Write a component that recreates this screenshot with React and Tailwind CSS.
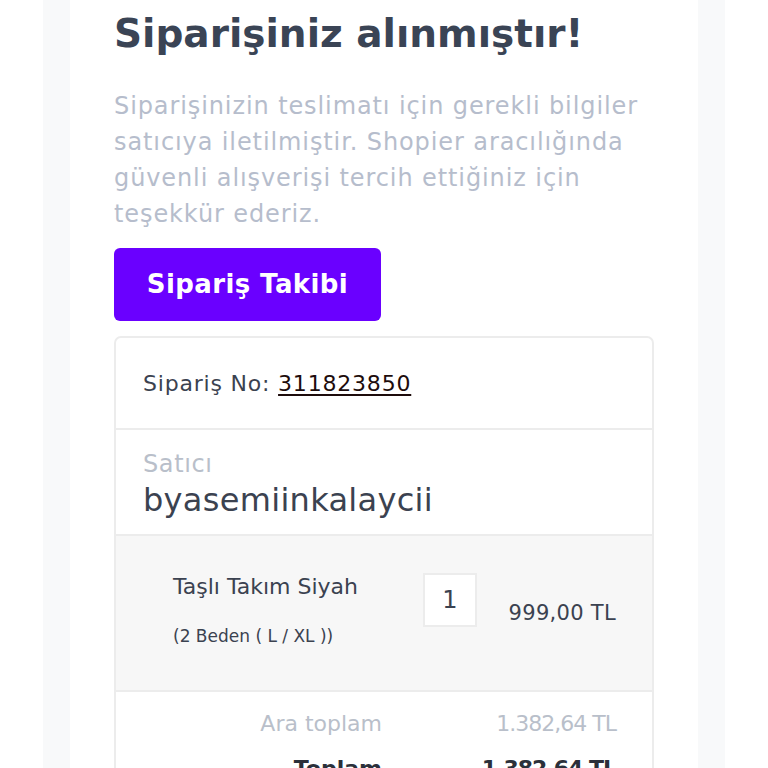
export default function App() {
    const font = { fontFamily: '"DejaVu Sans", "Noto Sans", sans-serif' };

    return (
        <div className="w-full h-[768px] overflow-hidden bg-white px-[43px]" style={font}>
            <div className="bg-[#f8f9fa] px-[27px] h-full">
                <div className="bg-white h-full px-[44px] pt-[10px]">
                    <h1 className="text-[39px] leading-[48px] font-bold text-[#3a4455]">
                        Siparişiniz alınmıştır!
                    </h1>
                    <p className="mt-[30px] text-[24px] leading-[36px] tracking-[0.9px] text-[#b6bdcc]">
                        Siparişinizin teslimatı için gerekli bilgiler satıcıya iletilmiştir. Shopier aracılığında güvenli alışverişi tercih ettiğiniz için teşekkür ederiz.
                    </p>

                    <button className="mt-4 w-[267px] h-[73px] rounded-[6px] bg-[#6a00ff] text-white text-[26px] font-bold tracking-[0.4px]">
                        Sipariş Takibi
                    </button>

                    {/* siparis karti */}
                    <div className="mt-[15px] border-2 border-[#ececec] rounded-[7px] overflow-hidden">
                        <div className="h-[90px] px-[27px] flex items-center text-[22px] tracking-[0.8px] text-[#3b4250]">
                            <span>Sipariş No:&nbsp;</span>
                            <a href="#" className="text-[#1d0c0c] underline underline-offset-[3px] decoration-2">311823850</a>
                        </div>
                        <div className="border-t-2 border-[#ececec] h-[106px] px-[27px] pt-[18px]">
                            <div className="text-[24px] leading-[32px] tracking-[0.6px] text-[#b9bfca]">Satıcı</div>
                            <div className="text-[32px] leading-[40px] tracking-[0.3px] text-[#3b4250]">byasemiinkalaycii</div>
                        </div>
                        <div className="border-t-2 border-[#ececec] bg-[#f7f7f7] h-[156px] flex pl-[57px] pr-[36px] pt-[36px]">
                            <div className="w-[250px]">
                                <div className="text-[22px] leading-[30px] text-[#3b4250]">Taşlı Takım Siyah</div>
                                <div className="mt-[22px] text-[17px] leading-[24px] text-[#3b4250]">(2 Beden ( L / XL ))</div>
                            </div>
                            <div className="w-[54px] h-[54px] bg-white border-2 border-[#ececec] flex items-center justify-center text-[24px] text-[#3b4250] mt-[1px]">
                                1
                            </div>
                            <div className="flex-1 text-right text-[21px] tracking-[0.3px] text-[#3b4250] pt-[26px]">
                                999,00 TL
                            </div>
                        </div>
                        <div className="border-t-2 border-[#ececec] px-[36px] pt-[16px] pb-[30px]">
                            <div className="flex justify-end items-center h-[30px] text-[22px] text-[#b9bfca]">
                                <span className="w-[230px] text-right">Ara toplam</span>
                                <span className="flex-1 text-right tracking-[-1px]">1.382,64 TL</span>
                            </div>
                            <div className="flex justify-end items-center h-[30px] mt-[15px] text-[22px] font-bold text-[#2b303a]">
                                <span className="w-[230px] text-right">Toplam</span>
                                <span className="flex-1 text-right tracking-[-1px]">1.382,64 TL</span>
                            </div>
                        </div>
                    </div>
                </div>
            </div>
        </div>
    );
}
